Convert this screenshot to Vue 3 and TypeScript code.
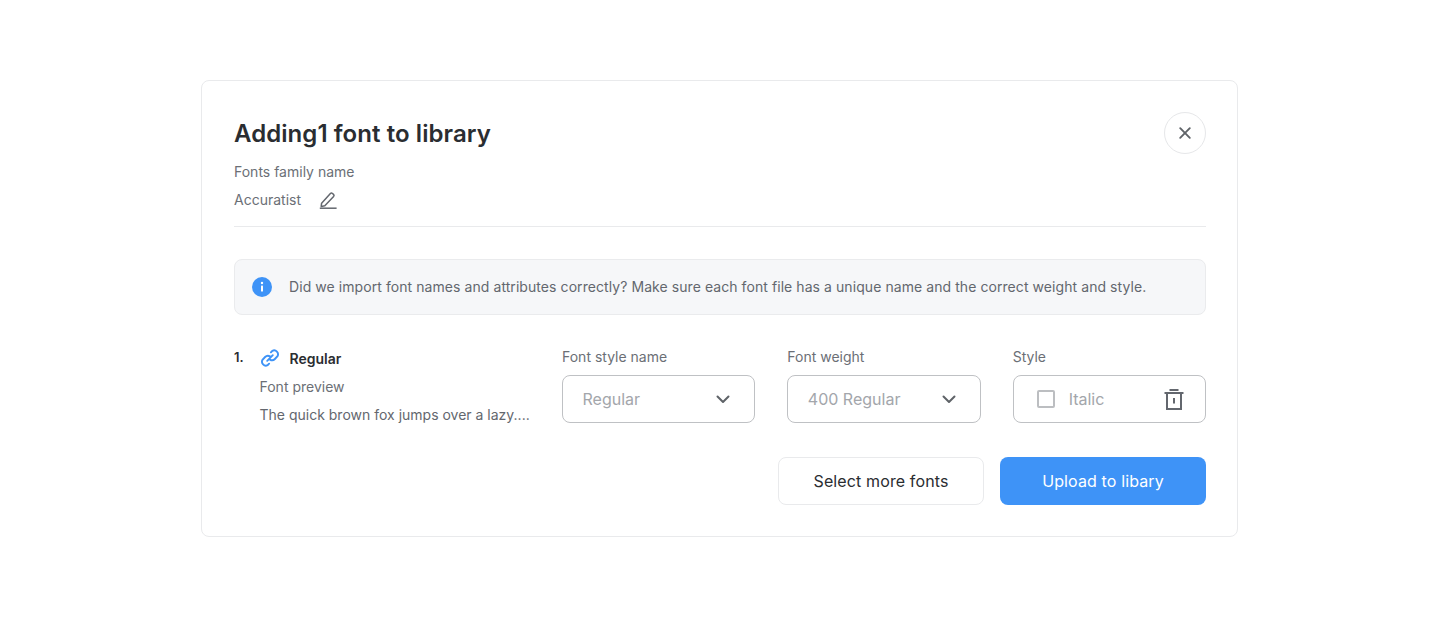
<script setup lang="ts">
interface SelectField {
  label: string
  value: string
}

const selects: SelectField[] = [
  { label: 'Font style name', value: 'Regular' },
  { label: 'Font weight', value: '400 Regular' }
]
</script>

<template>
  <div class="page">
    <section class="card">
      <header class="head">
        <h1 class="title">Adding1 font to library</h1>
        <button class="close" type="button" aria-label="Close">
          <svg width="14" height="14" viewBox="0 0 14 14" fill="none">
            <path d="M2.2 2.2l9.6 9.6M11.8 2.2l-9.6 9.6" stroke="#5f6368" stroke-width="1.9" stroke-linecap="round" />
          </svg>
        </button>
      </header>

      <div class="family">
        <div class="muted">Fonts family name</div>
        <div class="family-name">
          <span class="muted">Accuratist</span>
          <svg width="18" height="18" viewBox="0 0 18 18" fill="none">
            <path d="M2.6 12.2L11.4 2.6a1.5 1.5 0 0 1 2.1-.1l1 .9a1.5 1.5 0 0 1 .1 2.1l-8.8 9.2-3.6.7z" stroke="#63676e" stroke-width="1.5" stroke-linejoin="round" />
            <path d="M.8 17.2h16.8" stroke="#63676e" stroke-width="1.5" />
          </svg>
        </div>
      </div>

      <div class="notice">
        <svg width="20" height="20" viewBox="0 0 20 20">
          <circle cx="10" cy="10" r="10" fill="#3e93f7" />
          <circle cx="10" cy="6" r="1.2" fill="#fff" />
          <rect x="9" y="8.6" width="2" height="6" rx="0.6" fill="#fff" />
        </svg>
        <p>Did we import font names and attributes correctly? Make sure each font file has a unique name and the correct weight and style.</p>
      </div>

      <div class="row">
        <div class="file">
          <span class="num">1.</span>
          <div class="file-info">
            <div class="file-name">
              <svg width="20" height="20" viewBox="0 0 20 20" fill="none" stroke="#3e93f7" stroke-width="1.9" stroke-linecap="round">
                <path d="M10.9 4.3l1.5-1.5a3.9 3.9 0 0 1 5.1 5.4l-2.6 2.8a3.9 3.9 0 0 1-4.9.6" />
                <path d="M9.1 15.7l-1.5 1.5a3.9 3.9 0 0 1-5.1-5.4l2.6-2.8a3.9 3.9 0 0 1 4.9-.6" />
                <path d="M7.2 12.8l5.6-5.6" />
              </svg>
              <strong>Regular</strong>
            </div>
            <div class="muted">Font preview</div>
            <div class="preview">The quick brown fox jumps over a lazy....</div>
          </div>
        </div>

        <div v-for="item in selects" :key="item.label" class="field">
          <label class="muted">{{ item.label }}</label>
          <div class="control select">
            <span class="placeholder">{{ item.value }}</span>
            <svg width="14" height="9" viewBox="0 0 14 9" fill="none">
              <path d="M1.5 1.5L7 7l5.5-5.5" stroke="#5f6368" stroke-width="2" stroke-linecap="round" stroke-linejoin="round" />
            </svg>
          </div>
        </div>

        <div class="field">
          <label class="muted">Style</label>
          <div class="control style">
            <span class="check"></span>
            <span class="placeholder">Italic</span>
            <svg class="trash" width="20" height="21" viewBox="0 0 20 21" fill="none" stroke="#63676e" stroke-width="2">
              <path d="M0.5 4h19M5.5 1h9" />
              <path d="M3 4v16h14V4" />
              <path d="M10 9v5.5" />
            </svg>
          </div>
        </div>
      </div>

      <div class="actions">
        <button class="btn btn-light" type="button">Select more fonts</button>
        <button class="btn btn-primary" type="button">Upload to libary</button>
      </div>
    </section>
  </div>
</template>

<style>
html,
body {
  margin: 0;
  background: #fff;
}
</style>

<style scoped>
.page {
  width: 1440px;
  height: 617px;
  padding-top: 80px;
  box-sizing: border-box;
  font-family: Inter, "Liberation Sans", sans-serif;
  overflow: hidden;
}

.card {
  width: 1037px;
  margin-left: 201px;
  box-sizing: border-box;
  padding: 31px 31px 31px 32px;
  border: 1px solid #e9eaec;
  border-radius: 8px;
  background: #fff;
}

.head {
  display: flex;
  align-items: center;
  justify-content: space-between;
  height: 42px;
}

.title {
  margin: 2px 0 0;
  font-size: 24px;
  font-weight: 600;
  line-height: 32px;
  letter-spacing: 0.07px;
  color: #2a2d31;
}

.close {
  display: flex;
  align-items: center;
  justify-content: center;
  width: 42px;
  height: 42px;
  padding: 0;
  border: 1px solid #e6e7e9;
  border-radius: 50%;
  background: #fff;
}

.muted {
  font-size: 14px;
  line-height: 20px;
  color: #6b6f76;
}

.family {
  margin-top: 8px;
  padding-bottom: 16px;
  border-bottom: 1px solid #e9eaec;
}

.family-name {
  display: flex;
  align-items: center;
  gap: 18px;
  margin-top: 8px;
}

.notice {
  display: flex;
  align-items: center;
  gap: 17px;
  height: 56px;
  margin-top: 32px;
  padding: 0 17px;
  box-sizing: border-box;
  border: 1px solid #eaebed;
  border-radius: 8px;
  background: #f6f7f9;
}

.notice p {
  margin: 0;
  font-size: 14px;
  line-height: 20px;
  letter-spacing: 0.07px;
  color: #63676e;
}

.row {
  display: flex;
  gap: 32px;
  height: 76px;
  margin-top: 32px;
}

.file {
  display: flex;
  width: 296px;
  flex: none;
}

.num {
  width: 25.5px;
  flex: none;
  font-size: 13px;
  font-weight: 600;
  line-height: 20px;
  color: #2a2d31;
}

.file-name {
  display: flex;
  align-items: center;
  gap: 10px;
  height: 22px;
  margin-bottom: 8px;
  font-size: 14px;
  color: #2a2d31;
}

.file-name strong {
  font-weight: 600;
}

.preview {
  margin-top: 8px;
  font-size: 14px;
  line-height: 20px;
  color: #63676e;
  white-space: nowrap;
}

.field {
  flex: 1;
  min-width: 0;
}

.field label {
  display: block;
  margin-bottom: 8px;
}

.control {
  display: flex;
  align-items: center;
  height: 48px;
  box-sizing: border-box;
  padding: 0 19.5px;
  border: 1px solid #bfc1c4;
  border-radius: 8px;
}

.select {
  justify-content: space-between;
  padding-right: 24px;
}

.placeholder {
  font-size: 16px;
  color: #a3a6ab;
}

.check {
  width: 18px;
  height: 18px;
  box-sizing: border-box;
  margin: 0 14px 0 3.5px;
  border: 2px solid #bcbec1;
  border-radius: 2px;
}

.style {
  padding-right: 21px;
}

.trash {
  margin-left: auto;
}

.actions {
  display: flex;
  justify-content: flex-end;
  gap: 16px;
  margin-top: 34px;
}

.btn {
  width: 206px;
  height: 48px;
  border-radius: 8px;
  font-family: inherit;
  font-size: 16px;
  font-weight: 400;
  letter-spacing: 0.12px;
}

.btn-light {
  border: 1px solid #e9eaec;
  background: #fff;
  color: #2a2d31;
}

.btn-primary {
  border: none;
  background: #3e93f7;
  color: #fff;
}
</style>
